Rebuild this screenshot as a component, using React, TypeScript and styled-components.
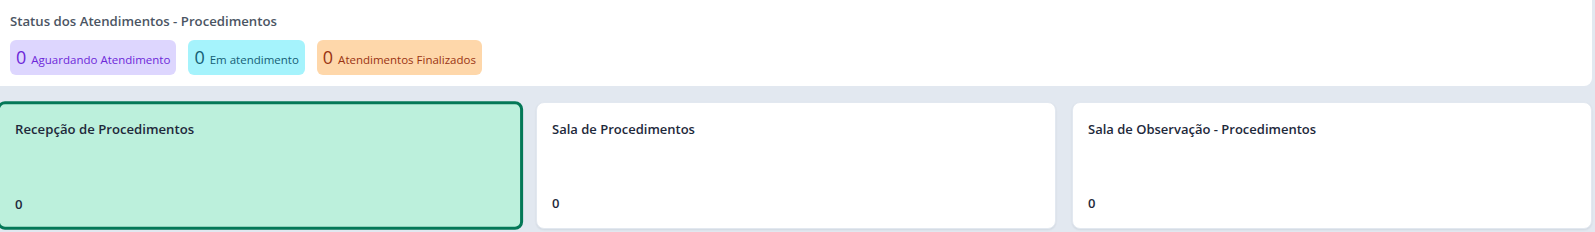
import React from "react";
import styled, { createGlobalStyle } from "styled-components";

const GlobalStyle = createGlobalStyle`
  html, body {
    margin: 0;
    padding: 0;
    background: #e2e8f0;
  }
  body {
    width: 1595px;
    height: 232px;
    overflow: hidden;
    font-family: "Open Sans", "Noto Sans", "Liberation Sans", sans-serif;
    -webkit-font-smoothing: antialiased;
  }
  * { box-sizing: border-box; }
`;

const Page = styled.div`
  display: flex;
  flex-direction: column;
  gap: 16px;
  width: 1595px;
  padding-right: 3px;
`;

const StatusPanel = styled.section`
  display: flex;
  flex-direction: column;
  gap: 10px;
  height: 86px;
  padding: 12px 10px 12px;
  background: #ffffff;
  border-radius: 0 0 8px 0;
`;

const PanelTitle = styled.h2`
  margin: 0;
  font-size: 13.2px;
  line-height: 18px;
  font-weight: 600;
  color: #4b5563;
`;

const BadgeRow = styled.div`
  display: flex;
  gap: 12px;
`;

const tones = {
  violet: { bg: "#ddd6fe", fg: "#6d28d9" },
  cyan: { bg: "#a5f3fc", fg: "#155e75" },
  orange: { bg: "#fed7aa", fg: "#9a3412" },
} as const;

type Tone = keyof typeof tones;

const Badge = styled.div<{ $tone: Tone }>`
  display: inline-flex;
  align-items: baseline;
  gap: 5px;
  height: 35px;
  padding: 7px 6px 0;
  border-radius: 6px;
  background: ${(p) => tones[p.$tone].bg};
  color: ${(p) => tones[p.$tone].fg};
`;

const BadgeCount = styled.span`
  font-size: 18px;
  line-height: 21px;
  font-weight: 500;
`;

const BadgeLabel = styled.span`
  font-size: 11.5px;
  line-height: 16px;
  font-weight: 500;
`;

const CardGrid = styled.div`
  display: grid;
  grid-template-columns: repeat(3, 520px);
  gap: 16px;
  height: 127px;
`;

const RoomCard = styled.div<{ $selected?: boolean }>`
  display: flex;
  flex-direction: column;
  justify-content: space-between;
  border-radius: 8px;
  border: ${(p) => (p.$selected ? "3px solid #047857" : "1px solid #e2e8f0")};
  padding: ${(p) => (p.$selected ? "14px 15px 13px" : "16px 15px 15px")};
  background: ${(p) => (p.$selected ? "#bcf0dc" : "#ffffff")};
  box-shadow: ${(p) => (p.$selected ? "none" : "0 1px 2px rgba(15, 23, 42, 0.08)")};
  transform: ${(p) => (p.$selected ? "scale(1.012)" : "none")};
  color: #1e293b;
`;

const RoomTitle = styled.div`
  font-size: 13px;
  line-height: 20px;
  font-weight: 600;
`;

const RoomCount = styled.div`
  font-size: 13px;
  line-height: 20px;
  font-weight: 600;
`;

const statuses: { tone: Tone; count: number; label: string }[] = [
  { tone: "violet", count: 0, label: "Aguardando Atendimento" },
  { tone: "cyan", count: 0, label: "Em atendimento" },
  { tone: "orange", count: 0, label: "Atendimentos Finalizados" },
];

const rooms = [
  { name: "Recepção de Procedimentos", count: 0, selected: true },
  { name: "Sala de Procedimentos", count: 0, selected: false },
  { name: "Sala de Observação - Procedimentos", count: 0, selected: false },
];

export default function App() {
  return (
    <>
      <GlobalStyle />
      <Page>
        <StatusPanel>
          <PanelTitle>Status dos Atendimentos - Procedimentos</PanelTitle>
          <BadgeRow>
            {statuses.map((s) => (
              <Badge key={s.label} $tone={s.tone}>
                <BadgeCount>{s.count}</BadgeCount>
                <BadgeLabel>{s.label}</BadgeLabel>
              </Badge>
            ))}
          </BadgeRow>
        </StatusPanel>
        <CardGrid>
          {rooms.map((r) => (
            <RoomCard key={r.name} $selected={r.selected}>
              <RoomTitle>{r.name}</RoomTitle>
              <RoomCount>{r.count}</RoomCount>
            </RoomCard>
          ))}
        </CardGrid>
      </Page>
    </>
  );
}
